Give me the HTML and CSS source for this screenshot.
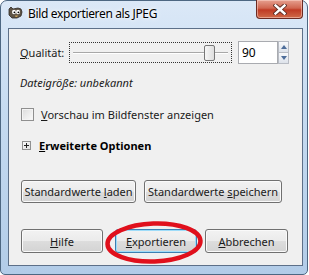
FILE: index.html
```html
<!DOCTYPE html>
<html lang="de">
<head>
    <meta charset="UTF-8">
    <title>Bild exportieren als JPEG</title>
    <link rel="stylesheet" href="styles.css">
</head>
<body>
    <div class="window">
        <div class="titlebar">
            <svg class="app-icon" width="15" height="13" viewBox="0 0 15 13">
                <path d="M1 3 L3 1 L5 3 L10 2 L13 3 L14 6 L13 10 L9 12 L4 12 L1 9 Z" fill="#5e5446" stroke="#2e2a24" stroke-width="0.8"/>
                <ellipse cx="6" cy="6" rx="2" ry="2.2" fill="#fff"/>
                <ellipse cx="10" cy="6" rx="2" ry="2.2" fill="#fff"/>
                <circle cx="6.4" cy="6.3" r="0.9" fill="#000"/>
                <circle cx="10.4" cy="6.3" r="0.9" fill="#000"/>
                <path d="M7 9.5 L10 9.5 L9 11 L7.5 11 Z" fill="#c9a25a"/>
            </svg>
            <span class="title">Bild exportieren als JPEG</span>
            <div class="close">
                <svg width="14" height="11" viewBox="0 0 14 11">
                    <path d="M2.5 1.5 L11.5 9.5 M11.5 1.5 L2.5 9.5" stroke="#5a2a22" stroke-width="4.2" stroke-linecap="square"/>
                    <path d="M2.5 1.5 L11.5 9.5 M11.5 1.5 L2.5 9.5" stroke="#fff" stroke-width="2.4" stroke-linecap="square"/>
                </svg>
            </div>
        </div>

        <div class="client">
            <div class="quality-row">
                <span class="qlabel"><u>Q</u>ualität:</span>
                <div class="slider-focus">
                    <div class="track"></div>
                    <div class="thumb"></div>
                </div>
                <div class="spin">
                    <div class="entry">90</div>
                    <div class="arrows">
                        <span class="arrow up"></span>
                        <span class="arrow down"></span>
                    </div>
                </div>
            </div>

            <div class="filesize">Dateigröße: unbekannt</div>

            <div class="check-row">
                <span class="checkbox"></span>
                <span><u>V</u>orschau im Bildfenster anzeigen</span>
            </div>

            <div class="expander-row">
                <span class="plus"></span>
                <span class="expander-label"><u>E</u>rweiterte Optionen</span>
            </div>

            <div class="defaults-row">
                <button class="btn btn-load">Standardwerte <u>l</u>aden</button>
                <button class="btn btn-save">Standardwerte <u>s</u>peichern</button>
            </div>

            <div class="action-row">
                <button class="btn btn-help"><u>H</u>ilfe</button>
                <button class="btn btn-export"><u>E</u>xportieren</button>
                <button class="btn btn-cancel"><u>A</u>bbrechen</button>
            </div>
        </div>

        <!-- roter Kreis um den Export-Button -->
        <svg class="marker" width="104" height="48" viewBox="0 0 104 48">
            <ellipse cx="51" cy="22.5" rx="46.5" ry="19" fill="none" stroke="#e0101c" stroke-width="4.5" transform="rotate(-2 51 22.5)"/>
        </svg>
    </div>
</body>
</html>
```

FILE: styles.css
```css
html, body {
  margin: 0;
  padding: 0;
  background: #fff;
}

body {
  font-family: "Noto Sans", "Open Sans", sans-serif;
  font-size: 11px;
  color: #1a1a1a;
}

.window {
  position: relative;
  box-sizing: border-box;
  width: 308px;
  height: 275px;
  border: 1px solid #4d6782;
  border-radius: 7px 7px 5px 5px;
  background: linear-gradient(#dbe8f7, #c6dbf1 40%, #b2cce8);
  padding: 0 4px 8px 7px;
  display: flex;
  flex-direction: column;
}

.titlebar {
  height: 27px;
  display: flex;
  align-items: flex-start;
}

.app-icon {
  margin-top: 5px;
  flex-shrink: 0;
}

.title {
  margin-top: 4px;
  margin-left: 5px;
  font-size: 12px;
  letter-spacing: -0.35px;
  color: #000;
  text-shadow: 0 0 6px #fff, 0 0 3px #fff;
}

.close {
  margin-left: auto;
  margin-top: -1px;
  width: 47px;
  height: 19px;
  box-sizing: border-box;
  border: 1px solid #6b2a22;
  border-top: none;
  border-radius: 0 0 4px 4px;
  background: linear-gradient(#e6a090, #d06650 45%, #bf3a24 55%, #cf6a48);
  box-shadow: inset 0 0 0 1px rgba(255, 220, 210, 0.5);
  display: flex;
  align-items: center;
  justify-content: center;
}

.client {
  flex: 1;
  border: 1px solid #5d7089;
  background: #f0f0f0;
  padding: 0 12px 0 12px;
}

.quality-row {
  margin-top: 12px;
  height: 23px;
  display: flex;
  align-items: center;
}

.qlabel {
  width: 49px;
  margin-left: -1px;
  flex-shrink: 0;
}

.slider-focus {
  position: relative;
  width: 161px;
  height: 19px;
  border: 1px dotted #333;
}

.track {
  position: absolute;
  left: 3px;
  right: 3px;
  top: 9px;
  height: 1px;
  background: #a8a8a8;
  border-bottom: 1px solid #fff;
}

.thumb {
  position: absolute;
  left: 134px;
  top: 2px;
  width: 9px;
  height: 14px;
  border: 1px solid #777;
  border-radius: 2px;
  background: linear-gradient(90deg, #f6f6f6, #dedede);
}

.spin {
  margin-left: 6px;
  display: flex;
  height: 23px;
}

.entry {
  box-sizing: border-box;
  width: 40px;
  height: 23px;
  border: 1px solid #a9abb0;
  background: #fff;
  padding-left: 3px;
  line-height: 21px;
  font-size: 12px;
  color: #000;
}

.arrows {
  display: flex;
  flex-direction: column;
  width: 11px;
  height: 23px;
}

.arrow {
  flex: 1;
  box-sizing: border-box;
  border: 1px solid #b8bcc4;
  background: linear-gradient(#f8f9fb, #dde2ea);
  position: relative;
}

.arrow.up {
  border-bottom: none;
}

.arrow::after {
  content: "";
  position: absolute;
  left: 2px;
  top: 3px;
  border-left: 3px solid transparent;
  border-right: 3px solid transparent;
}

.arrow.up::after {
  border-bottom: 4px solid #4d6d9a;
}

.arrow.down::after {
  border-top: 4px solid #4d6d9a;
}

.filesize {
  margin-top: 11px;
  margin-left: -1px;
  height: 16px;
  line-height: 16px;
  font-style: italic;
}

.check-row {
  margin-top: 15px;
  height: 16px;
  display: flex;
  align-items: center;
}

.checkbox {
  box-sizing: border-box;
  width: 13px;
  height: 13px;
  margin-right: 7px;
  border: 1px solid #8f8f8f;
  background: linear-gradient(135deg, #dcdcdc, #fbfbfb);
  box-shadow: inset 0 0 0 1px #f4f4f4;
}

.expander-row {
  margin-top: 15px;
  height: 16px;
  display: flex;
  align-items: center;
}

.plus {
  position: relative;
  box-sizing: border-box;
  width: 9px;
  height: 9px;
  margin-left: 1px;
  margin-right: 8px;
  border: 1px solid #919191;
  background: linear-gradient(135deg, #f8f8f8, #e0e0e0);
}

.plus::before,
.plus::after {
  content: "";
  position: absolute;
  background: #222;
}

.plus::before {
  left: 1px;
  top: 3px;
  width: 5px;
  height: 1px;
}

.plus::after {
  left: 3px;
  top: 1px;
  width: 1px;
  height: 5px;
}

.expander-label {
  font-weight: bold;
  color: #000;
}

.defaults-row {
  margin-top: 27px;
  display: flex;
}

.btn {
  box-sizing: border-box;
  height: 23px;
  padding: 0;
  white-space: nowrap;
  font-family: "Noto Sans", "Open Sans", sans-serif;
  font-size: 11px;
  color: #1a1a1a;
  border: 1px solid #707070;
  border-radius: 3px;
  background: linear-gradient(#f2f2f2, #ebebeb 50%, #dddddd 51%, #d3d3d3);
  box-shadow: inset 0 0 0 1px #fafafa;
}

.btn-load {
  width: 115px;
}

.btn-save {
  width: 138px;
  margin-left: 8px;
}

.action-row {
  margin-top: 26px;
  display: flex;
}

.action-row .btn {
  height: 24px;
}

.btn-help {
  width: 82px;
}

.btn-export {
  width: 82px;
  margin-left: 12px;
  border-color: #3c7fb1;
  box-shadow: inset 0 0 0 1px #9edcf9;
}

.btn-cancel {
  width: 83px;
  margin-left: 8px;
}

.marker {
  position: absolute;
  left: 102px;
  top: 219px;
}
```
